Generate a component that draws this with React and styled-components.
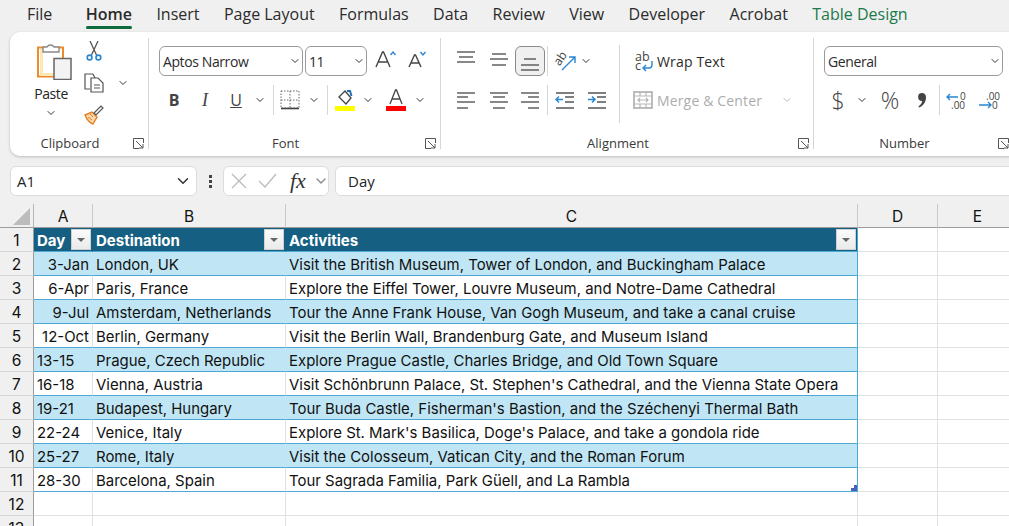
import React from "react";
import styled, { createGlobalStyle } from "styled-components";
import { ChevronDown } from "lucide-react";

const GlobalStyle = createGlobalStyle`
  html, body {
    margin: 0;
    padding: 0;
    background: #f0f0f0;
    overflow: hidden;
    font-family: "Open Sans", "Noto Sans", sans-serif;
    color: #242424;
  }
  * { box-sizing: border-box; }
  svg { flex: none; }
`;

const Page = styled.div`
  width: 1009px;
  height: 526px;
  overflow: hidden;
  display: flex;
  flex-direction: column;
`;

const TabBar = styled.div`
  height: 32px;
  flex: none;
  display: flex;
  gap: 24.4px;
  padding-left: 27px;
`;

const Tab = styled.div`
  position: relative;
  height: 28px;
  margin-right: ${(p) => (p.$first ? 9 : 0)}px;
  line-height: 28px;
  font-size: 16px;
  white-space: nowrap;
  font-weight: ${(p) => (p.$active ? 600 : 400)};
  color: ${(p) => (p.$green ? "#1c7a4a" : "#2b2b2b")};
  ${(p) =>
    p.$active &&
    `&::after {
      content: "";
      position: absolute;
      left: 0;
      right: 0;
      bottom: -1px;
      height: 3px;
      border-radius: 2px;
      background: #0f6b3b;
    }`}
`;

const Ribbon = styled.div`
  flex: none;
  width: 1030px;
  height: 124px;
  margin-left: 10px;
  background: #fff;
  border-radius: 10px 0 0 10px;
  box-shadow: 0 1px 3px rgba(0, 0, 0, 0.22);
  display: flex;
  padding-top: 6px;
`;

const Group = styled.div`
  position: relative;
  flex: none;
  width: ${(p) => p.$w}px;
  height: 111px;
  border-right: 1px solid ${(p) => (p.$last ? "transparent" : "#d6d6d6")};
  padding-left: ${(p) => p.$pad || 0}px;
`;

const GroupLabel = styled.div`
  position: absolute;
  left: 0;
  right: 18px;
  bottom: -2px;
  text-align: center;
  font-size: 13px;
  line-height: 16px;
  color: #3a3a3a;
`;

const Launcher = styled.svg`
  position: absolute;
  right: 4px;
  bottom: 0;
  width: 11px;
  height: 11px;
`;

const ClipboardRow = styled.div`
  display: flex;
`;

const PasteColumn = styled.div`
  width: 58px;
  display: flex;
  flex-direction: column;
  align-items: center;
  padding-top: 3px;
  font-size: 14px;
  letter-spacing: -0.4px;
  line-height: 20px;
`;

const PasteArt = styled.svg`
  margin-left: 5px;
`;

const PasteLabel = styled.span`
  margin: 4px 0 3px;
`;

const SmallColumn = styled.div`
  width: 28px;
  display: flex;
  flex-direction: column;
  align-items: center;
  padding-top: 3px;
  gap: 12px;
`;

const CopyChevron = styled.div`
  width: 30px;
  height: 30px;
  margin-top: 30px;
  display: flex;
  align-items: center;
  justify-content: center;
`;

const Rows = styled.div`
  flex: none;
  display: flex;
  flex-direction: column;
  gap: 9px;
  padding-top: 8px;
`;

const Row = styled.div`
  display: flex;
  align-items: center;
  height: 30px;
`;

const Select = styled.div`
  flex: none;
  width: ${(p) => p.$w}px;
  height: 30px;
  margin-right: ${(p) => p.$mr || 0}px;
  border: 1px solid #9a9a9a;
  border-radius: 6px;
  background: #fff;
  display: flex;
  align-items: center;
  justify-content: space-between;
  padding: 0 1px 0 3px;
  font-size: 14px;
  letter-spacing: -0.4px;
  color: #2b2b2b;
`;

const Tool = styled.div`
  flex: none;
  width: ${(p) => p.$w}px;
  height: 30px;
  display: flex;
  align-items: center;
  justify-content: center;
  font-size: ${(p) => p.$fs || 14}px;
  font-weight: ${(p) => p.$weight || 400};
  color: #444;
  border-radius: 6px;
  ${(p) => p.$active && "background: #f0f0f0; border: 1px solid #8a8a8a;"}
`;

const ItalicMark = styled.i`
  font-family: "Liberation Serif", serif;
  font-size: 18px;
`;

const Sep = styled.div`
  flex: none;
  width: 1px;
  height: 30px;
  background: #d6d6d6;
`;

const WrapColumn = styled.div`
  flex: none;
  width: 190px;
  margin: 7px 0 0 6px;
  border-left: 1px solid #d6d6d6;
  height: 78px;
  padding: 1px 0 0 13px;
  display: flex;
  flex-direction: column;
  gap: 9px;
`;

const WrapRow = styled.div`
  display: flex;
  align-items: center;
  gap: 4px;
  height: 30px;
  font-size: 14px;
  letter-spacing: 0.15px;
  white-space: nowrap;
  color: ${(p) => (p.$off ? "#adadad" : "#2b2b2b")};
`;

const MergeChevron = styled.span`
  display: flex;
  margin-left: 15px;
`;

const AlignSplit = styled.div`
  display: flex;
`;

const FormulaBar = styled.div`
  flex: none;
  height: 30px;
  margin-top: 10px;
  padding-left: 10px;
  display: flex;
  align-items: center;
`;

const NameBox = styled.div`
  flex: none;
  width: 187px;
  height: 30px;
  background: #fff;
  border: 1px solid #dcdcdc;
  border-radius: 6px;
  display: flex;
  align-items: center;
  justify-content: space-between;
  padding: 0 4px 0 6px;
  font-size: 15px;
`;

const Dots = styled.div`
  flex: none;
  width: 26px;
  display: flex;
  flex-direction: column;
  align-items: center;
  gap: 2px;
  span {
    width: 3px;
    height: 3px;
    background: #444;
  }
`;

const FxBox = styled.div`
  flex: none;
  width: 106px;
  height: 30px;
  background: #fff;
  border: 1px solid #dcdcdc;
  border-radius: 6px;
  display: flex;
  align-items: center;
  padding-left: 6px;
  gap: 9px;
`;

const FxText = styled.span`
  flex: none;
  width: 22px;
  margin: 0 -8px 0 4px;
  font-family: "Liberation Serif", serif;
  font-style: italic;
  font-size: 22px;
  font-weight: 400;
  color: #333;
`;

const FormulaInput = styled.div`
  flex: none;
  width: 700px;
  height: 30px;
  margin-left: 6px;
  background: #fff;
  border: 1px solid #dcdcdc;
  border-radius: 6px 0 0 6px;
  display: flex;
  align-items: center;
  padding-left: 12px;
  font-size: 15px;
`;

const Sheet = styled.div`
  flex: none;
  margin-top: 8px;
  display: grid;
  grid-template-columns: 34px 59px 193px 572px 80px 80px;
  grid-auto-rows: 24px;
  width: 1018px;
  background: #fff;
  font-family: "Inter", "Noto Sans", sans-serif;
`;

const Corner = styled.div`
  background: #f0f0f0;
  border-right: 1px solid #b5b5b5;
  border-bottom: 1px solid #9c9c9c;
  display: flex;
  justify-content: flex-end;
  align-items: flex-end;
  padding: 0 3px 2px 0;
`;

const ColHead = styled.div`
  background: #f0f0f0;
  border-right: 1px solid #c8c8c8;
  border-bottom: 1px solid #9c9c9c;
  text-align: center;
  padding-top: 1px;
  line-height: 24px;
  font-size: 15.5px;
  color: #111;
`;

const RowHead = styled.div`
  background: #f0f0f0;
  border-right: 1px solid #9c9c9c;
  border-bottom: 1px solid #d4d4d4;
  text-align: center;
  padding-top: 1px;
  line-height: 24px;
  font-size: 15.5px;
  color: #111;
`;

const rightEdge = (p) => {
  if (p.$edge) return "#4ea8d6";
  return p.$band ? "#c0e6f5" : "#e0e0e0";
};

const Cell = styled.div`
  position: relative;
  padding: 1px 3px 0;
  line-height: 24px;
  font-size: 14.95px;
  white-space: nowrap;
  color: #111;
  text-align: ${(p) => (p.$right ? "right" : "left")};
  background: ${(p) => (p.$band ? "#c0e6f5" : "#fff")};
  border-bottom: 1px solid ${(p) => (p.$table ? "#4ea8d6" : "#e0e0e0")};
  border-right: 1px solid ${rightEdge};
`;

const HeadCell = styled.div`
  display: flex;
  align-items: center;
  justify-content: space-between;
  padding: 0 1px 0 3px;
  background: #156082;
  color: #fff;
  font-size: 15px;
  font-weight: 700;
  border-bottom: 1px solid #4ea8d6;
  border-right: 1px solid ${(p) => (p.$edge ? "#4ea8d6" : "#156082")};
`;

const HeadLabel = styled.span`
  margin-top: 2px;
`;

const FilterButton = styled.div`
  width: 20px;
  height: 21px;
  background: linear-gradient(#fbfbfb, #eaeaea);
  border: 1px solid #d0d0d0;
  display: flex;
  align-items: center;
  justify-content: center;
  &::after {
    content: "";
    border-left: 4px solid transparent;
    border-right: 4px solid transparent;
    border-top: 4px solid #666;
  }
`;

const ResizeHandle = styled.svg`
  position: absolute;
  right: 0;
  bottom: 0;
  width: 6px;
  height: 6px;
`;

const Chev = ({ size = 12, color = "#333" }) => (
  <ChevronDown size={size} color={color} strokeWidth={2} />
);

const LauncherIcon = () => (
  <Launcher viewBox="0 0 11 11" fill="none" stroke="#555">
    <path d="M10.5 5V.5H.5v10H6" />
    <path d="M3 3l7 7M10 6v4H6" />
  </Launcher>
);

const PasteIcon = () => (
  <PasteArt width="36" height="39" viewBox="0 0 36 39">
    <rect x="2" y="6.5" width="25" height="29" fill="#fff" stroke="#ee8a28" strokeWidth="2" />
    <path d="M4 8h3v24h19v3H4z" fill="#fde6b8" />
    <path d="M7 11V6h4a4 4 0 0 1 7 0h5v5z" fill="#fff" stroke="#8a8a8a" strokeWidth="1.4" />
    <rect x="18" y="17.5" width="17" height="21" fill="#f3f3f3" stroke="#666" strokeWidth="1.5" />
  </PasteArt>
);

const CutIcon = () => (
  <svg width="16" height="20" viewBox="0 0 16 20" fill="none">
    <path d="M4 0l6.5 14M12 0L5.5 14" stroke="#555" strokeWidth="1.3" />
    <circle cx="3.6" cy="16.5" r="2.4" stroke="#2a86d1" strokeWidth="1.6" />
    <circle cx="12.4" cy="16.5" r="2.4" stroke="#2a86d1" strokeWidth="1.6" />
  </svg>
);

const CopyIcon = () => (
  <svg width="20" height="20" viewBox="0 0 20 20" fill="none" stroke="#555" strokeWidth="1.2">
    <path d="M9 1H1v15h5" />
    <path d="M9 1l2 4" />
    <path d="M7 5h7l5 5v9H7z" fill="#fff" />
    <path d="M10 12h6M10 15h6" />
  </svg>
);

const BrushIcon = () => (
  <svg width="20" height="20" viewBox="0 0 20 20" fill="none">
    <path d="M1 10l7-3 5 5-4 7c-3-1-6-4-8-9z" fill="#fbd7ac" stroke="#e67e22" strokeWidth="1.4" />
    <path d="M4 12l4 3M6 9l3 3" stroke="#e67e22" />
    <path d="M10 8l7-7 2 2-7 7z" fill="#fff" stroke="#555" strokeWidth="1.2" />
  </svg>
);

const GrowA = () => (
  <svg width="24" height="24" viewBox="0 0 24 24" fill="none">
    <path d="M4 18L10.5 3h1L18 18M6 13h10" stroke="#444" strokeWidth="1.4" />
    <path d="M18.5 6l2.5-3 2.5 3" stroke="#2a86d1" strokeWidth="1.4" />
  </svg>
);

const ShrinkA = () => (
  <svg width="24" height="24" viewBox="0 0 24 24" fill="none">
    <path d="M4 18L9.5 6h1L16 18M6 14h8" stroke="#444" strokeWidth="1.4" />
    <path d="M15.5 3l2.5 3 2.5-3" stroke="#2a86d1" strokeWidth="1.4" />
  </svg>
);

const LinesIcon = ({ rows }) => (
  <svg width="20" height="20" viewBox="0 0 20 20" stroke="#555" strokeWidth="1.4">
    {rows.map((r, i) => (
      <path key={i} d={`M${r[0]} ${r[2]}H${r[1]}`} />
    ))}
  </svg>
);

const BordersIcon = () => (
  <svg width="20" height="20" viewBox="0 0 20 20" fill="none" stroke="#666">
    <path d="M1 1h18v17H1z" strokeDasharray="1.5 1.5" />
    <path d="M10 1v17M1 10h18" strokeDasharray="1.5 1.5" />
    <path d="M1 18.5h18" strokeWidth="1.6" stroke="#444" />
  </svg>
);

const FillIcon = () => (
  <svg width="22" height="24" viewBox="0 0 22 24" fill="none">
    <path d="M5 9l6-6 6 7-5 6z" fill="#fff" stroke="#444" strokeWidth="1.3" />
    <path d="M13 3h3l1.5 5" stroke="#1f6fb5" strokeWidth="2" />
    <rect x="1" y="18" width="20" height="5" fill="#ffff00" />
  </svg>
);

const FontColorIcon = () => (
  <svg width="22" height="24" viewBox="0 0 22 24" fill="none">
    <path d="M5 16L10.5 2h1L17 16M7 11h8" stroke="#444" strokeWidth="1.3" />
    <rect x="1" y="18" width="20" height="5" fill="#ff0000" />
  </svg>
);

const OrientIcon = () => (
  <svg width="22" height="22" viewBox="0 0 22 22" fill="none" overflow="visible">
    <text x="0" y="12" fontSize="12" fill="#444" fontFamily="Open Sans" transform="rotate(-55 7 9)">
      ab
    </text>
    <path d="M8 20L21 7M15 7h6v6" stroke="#2a86d1" strokeWidth="1.4" />
  </svg>
);

const IndentIcon = ({ flip }) => (
  <svg width="20" height="20" viewBox="0 0 20 20" fill="none">
    <path d="M1 3h18M1 18h18M10 7h9M10 12h9" stroke="#555" strokeWidth="1.4" />
    <path
      d={flip ? "M1 9.5h7M5 6.5l3 3-3 3" : "M8 9.5H1M4 6.5l-3 3 3 3"}
      stroke="#2a86d1"
      strokeWidth="1.5"
    />
  </svg>
);

const WrapIcon = () => (
  <svg width="20" height="22" viewBox="-2 0 20 22" fill="none" overflow="visible">
    <text x="0" y="11" fontSize="12.5" fill="#444" fontFamily="Open Sans">ab</text>
    <text x="0" y="20" fontSize="12.5" fill="#444" fontFamily="Open Sans">c</text>
    <path d="M8 18h6a3 3 0 0 0 3-3v-4M11 15l-3 3 3 3" stroke="#2a86d1" strokeWidth="1.4" />
  </svg>
);

const MergeIcon = () => (
  <svg width="20" height="18" viewBox="0 0 20 18" fill="none" stroke="#b5b5b5" strokeWidth="1.2">
    <rect x="1" y="1" width="18" height="16" strokeWidth="1.8" />
    <path d="M1 5h18M1 13h18M7 1v4M13 1v4M7 13v4M13 13v4" />
    <path d="M5 9h10M7 7L5 9l2 2M13 7l2 2-2 2" />
  </svg>
);

const CommaIcon = () => (
  <svg width="10" height="16" viewBox="0 0 10 16">
    <path d="M5 1a4 4 0 0 1 4 4.4C9 10 6 14 2 15.5l-.6-1C3.5 13 5 11 5.2 9A4 4 0 0 1 5 1z" fill="#444" />
  </svg>
);

const DecimalIcon = ({ more }) => (
  <svg width="24" height="24" viewBox="0 0 24 24" fill="none" overflow="visible">
    <text x={more ? 9 : 14} y="12" fontSize="10" fill="#444" fontFamily="Open Sans">
      {more ? ".00" : "0"}
    </text>
    <text x={more ? 15 : 5} y="21" fontSize="10" fill="#444" fontFamily="Open Sans">
      {more ? "0" : ".00"}
    </text>
    <path
      d={more ? "M2 17h12M11 14l3 3-3 3" : "M1 9h11M4 6L1 9l3 3"}
      stroke="#2a86d1"
      strokeWidth="1.4"
    />
  </svg>
);

const CrossIcon = () => (
  <svg width="18" height="18" viewBox="0 0 18 18" stroke="#bdbdbd" strokeWidth="1.4">
    <path d="M2 2l14 14M16 2L2 16" />
  </svg>
);

const CheckIcon = () => (
  <svg width="20" height="18" viewBox="0 0 20 18" fill="none" stroke="#bdbdbd" strokeWidth="1.4">
    <path d="M2 9l6 6L19 2" />
  </svg>
);

const rows = [
  ["3-Jan", "London, UK", "Visit the British Museum, Tower of London, and Buckingham Palace", true],
  ["6-Apr", "Paris, France", "Explore the Eiffel Tower, Louvre Museum, and Notre-Dame Cathedral", true],
  ["9-Jul", "Amsterdam, Netherlands", "Tour the Anne Frank House, Van Gogh Museum, and take a canal cruise", true],
  ["12-Oct", "Berlin, Germany", "Visit the Berlin Wall, Brandenburg Gate, and Museum Island", true],
  ["13-15", "Prague, Czech Republic", "Explore Prague Castle, Charles Bridge, and Old Town Square"],
  ["16-18", "Vienna, Austria", "Visit Schönbrunn Palace, St. Stephen's Cathedral, and the Vienna State Opera"],
  ["19-21", "Budapest, Hungary", "Tour Buda Castle, Fisherman's Bastion, and the Széchenyi Thermal Bath"],
  ["22-24", "Venice, Italy", "Explore St. Mark's Basilica, Doge's Palace, and take a gondola ride"],
  ["25-27", "Rome, Italy", "Visit the Colosseum, Vatican City, and the Roman Forum"],
  ["28-30", "Barcelona, Spain", "Tour Sagrada Familia, Park Güell, and La Rambla"],
];

const tabs = [
  "File", "Home", "Insert", "Page Layout", "Formulas", "Data",
  "Review", "View", "Developer", "Acrobat", "Table Design",
];

export default function App() {
  return (
    <Page>
      <GlobalStyle />
      <TabBar>
        {tabs.map((t) => (
          <Tab key={t} $first={t === "File"} $active={t === "Home"} $green={t === "Table Design"}>
            {t}
          </Tab>
        ))}
      </TabBar>

      <Ribbon>
        <Group $w={139} $pad={12}>
          <ClipboardRow>
            <PasteColumn>
              <PasteIcon />
              <PasteLabel>Paste</PasteLabel>
              <Chev />
            </PasteColumn>
            <SmallColumn>
              <CutIcon />
              <CopyIcon />
              <BrushIcon />
            </SmallColumn>
            <CopyChevron><Chev /></CopyChevron>
          </ClipboardRow>
          <GroupLabel>Clipboard</GroupLabel>
          <LauncherIcon />
        </Group>

        <Group $w={292} $pad={10}>
          <Rows>
            <Row>
              <Select $w={144} $mr={2}>Aptos Narrow<Chev /></Select>
              <Select $w={62}>11<Chev /></Select>
              <Tool $w={34}><GrowA /></Tool>
              <Tool $w={32}><ShrinkA /></Tool>
            </Row>
            <Row>
              <Tool $w={30} $fs={16} $weight={700}>B</Tool>
              <Tool $w={32}><ItalicMark>I</ItalicMark></Tool>
              <Tool $w={30} $fs={16}><u>U</u></Tool>
              <Tool $w={18}><Chev /></Tool>
              <Tool $w={8}><Sep /></Tool>
              <Tool $w={26}><BordersIcon /></Tool>
              <Tool $w={22}><Chev /></Tool>
              <Tool $w={4}><Sep /></Tool>
              <Tool $w={32}><FillIcon /></Tool>
              <Tool $w={14}><Chev /></Tool>
              <Tool $w={42}><FontColorIcon /></Tool>
              <Tool $w={6}><Chev /></Tool>
            </Row>
          </Rows>
          <GroupLabel>Font</GroupLabel>
          <LauncherIcon />
        </Group>

        <Group $w={373} $pad={9}>
          <AlignSplit>
            <Rows>
              <Row>
                <Tool $w={32}><LinesIcon rows={[[1, 19, 1], [3, 17, 6], [1, 19, 11]]} /></Tool>
                <Tool $w={33}><LinesIcon rows={[[3, 17, 3], [1, 19, 8], [3, 17, 14]]} /></Tool>
                <Tool $w={30} $active><LinesIcon rows={[[4, 16, 8], [1, 19, 14], [1, 19, 19]]} /></Tool>
                <Tool $w={4}><Sep /></Tool>
                <Tool $w={32}><OrientIcon /></Tool>
                <Tool $w={10}><Chev /></Tool>
              </Row>
              <Row>
                <Tool $w={32}><LinesIcon rows={[[1, 19, 3], [1, 12, 7], [1, 19, 12], [1, 12, 18]]} /></Tool>
                <Tool $w={33}><LinesIcon rows={[[1, 19, 3], [4, 16, 7], [1, 19, 12], [4, 16, 18]]} /></Tool>
                <Tool $w={30}><LinesIcon rows={[[1, 19, 3], [8, 19, 7], [1, 19, 12], [8, 19, 18]]} /></Tool>
                <Tool $w={4}><Sep /></Tool>
                <Tool $w={32}><IndentIcon /></Tool>
                <Tool $w={32}><IndentIcon flip /></Tool>
              </Row>
            </Rows>
            <WrapColumn>
              <WrapRow><WrapIcon />Wrap Text</WrapRow>
              <WrapRow $off>
                <MergeIcon />Merge &amp; Center
                <MergeChevron><Chev color="#b5b5b5" /></MergeChevron>
              </WrapRow>
            </WrapColumn>
          </AlignSplit>
          <GroupLabel>Alignment</GroupLabel>
          <LauncherIcon />
        </Group>

        <Group $w={200} $pad={10} $last>
          <Rows>
            <Row>
              <Select $w={179}>General<Chev /></Select>
            </Row>
            <Row>
              <Tool $w={28} $fs={23} $weight={300}>$</Tool>
              <Tool $w={20}><Chev /></Tool>
              <Tool $w={36} $fs={23} $weight={300}>%</Tool>
              <Tool $w={28}><CommaIcon /></Tool>
              <Tool $w={6}><Sep /></Tool>
              <Tool $w={32}><DecimalIcon /></Tool>
              <Tool $w={30}><DecimalIcon more /></Tool>
            </Row>
          </Rows>
          <GroupLabel>Number</GroupLabel>
          <LauncherIcon />
        </Group>
      </Ribbon>

      <FormulaBar>
        <NameBox>A1<Chev size={18} /></NameBox>
        <Dots><span /><span /><span /></Dots>
        <FxBox>
          <CrossIcon />
          <CheckIcon />
          <FxText>fx</FxText>
          <Chev size={16} color="#888" />
        </FxBox>
        <FormulaInput>Day</FormulaInput>
      </FormulaBar>

      <Sheet>
        <Corner>
          <svg width="17" height="17" viewBox="0 0 17 17"><path d="M17 0v17H0z" fill="#bcbcbc" /></svg>
        </Corner>
        {["A", "B", "C", "D", "E"].map((c) => <ColHead key={c}>{c}</ColHead>)}

        <RowHead>1</RowHead>
        <HeadCell><HeadLabel>Day</HeadLabel><FilterButton /></HeadCell>
        <HeadCell><HeadLabel>Destination</HeadLabel><FilterButton /></HeadCell>
        <HeadCell $edge><HeadLabel>Activities</HeadLabel><FilterButton /></HeadCell>
        <Cell />
        <Cell />

        {rows.map((r, i) => (
          <React.Fragment key={r[0]}>
            <RowHead>{i + 2}</RowHead>
            <Cell $table $band={i % 2 === 0} $right={r[3]}>{r[0]}</Cell>
            <Cell $table $band={i % 2 === 0}>{r[1]}</Cell>
            <Cell $table $edge $band={i % 2 === 0}>
              {r[2]}
              {i === rows.length - 1 && (
                <ResizeHandle viewBox="0 0 6 6"><path d="M3 0h3v6H0V3h3z" fill="#4a5fb8" /></ResizeHandle>
              )}
            </Cell>
            <Cell />
            <Cell />
          </React.Fragment>
        ))}

        {[12, 13].map((n) => (
          <React.Fragment key={n}>
            <RowHead>{n}</RowHead>
            <Cell /><Cell /><Cell /><Cell /><Cell />
          </React.Fragment>
        ))}
      </Sheet>
    </Page>
  );
}
